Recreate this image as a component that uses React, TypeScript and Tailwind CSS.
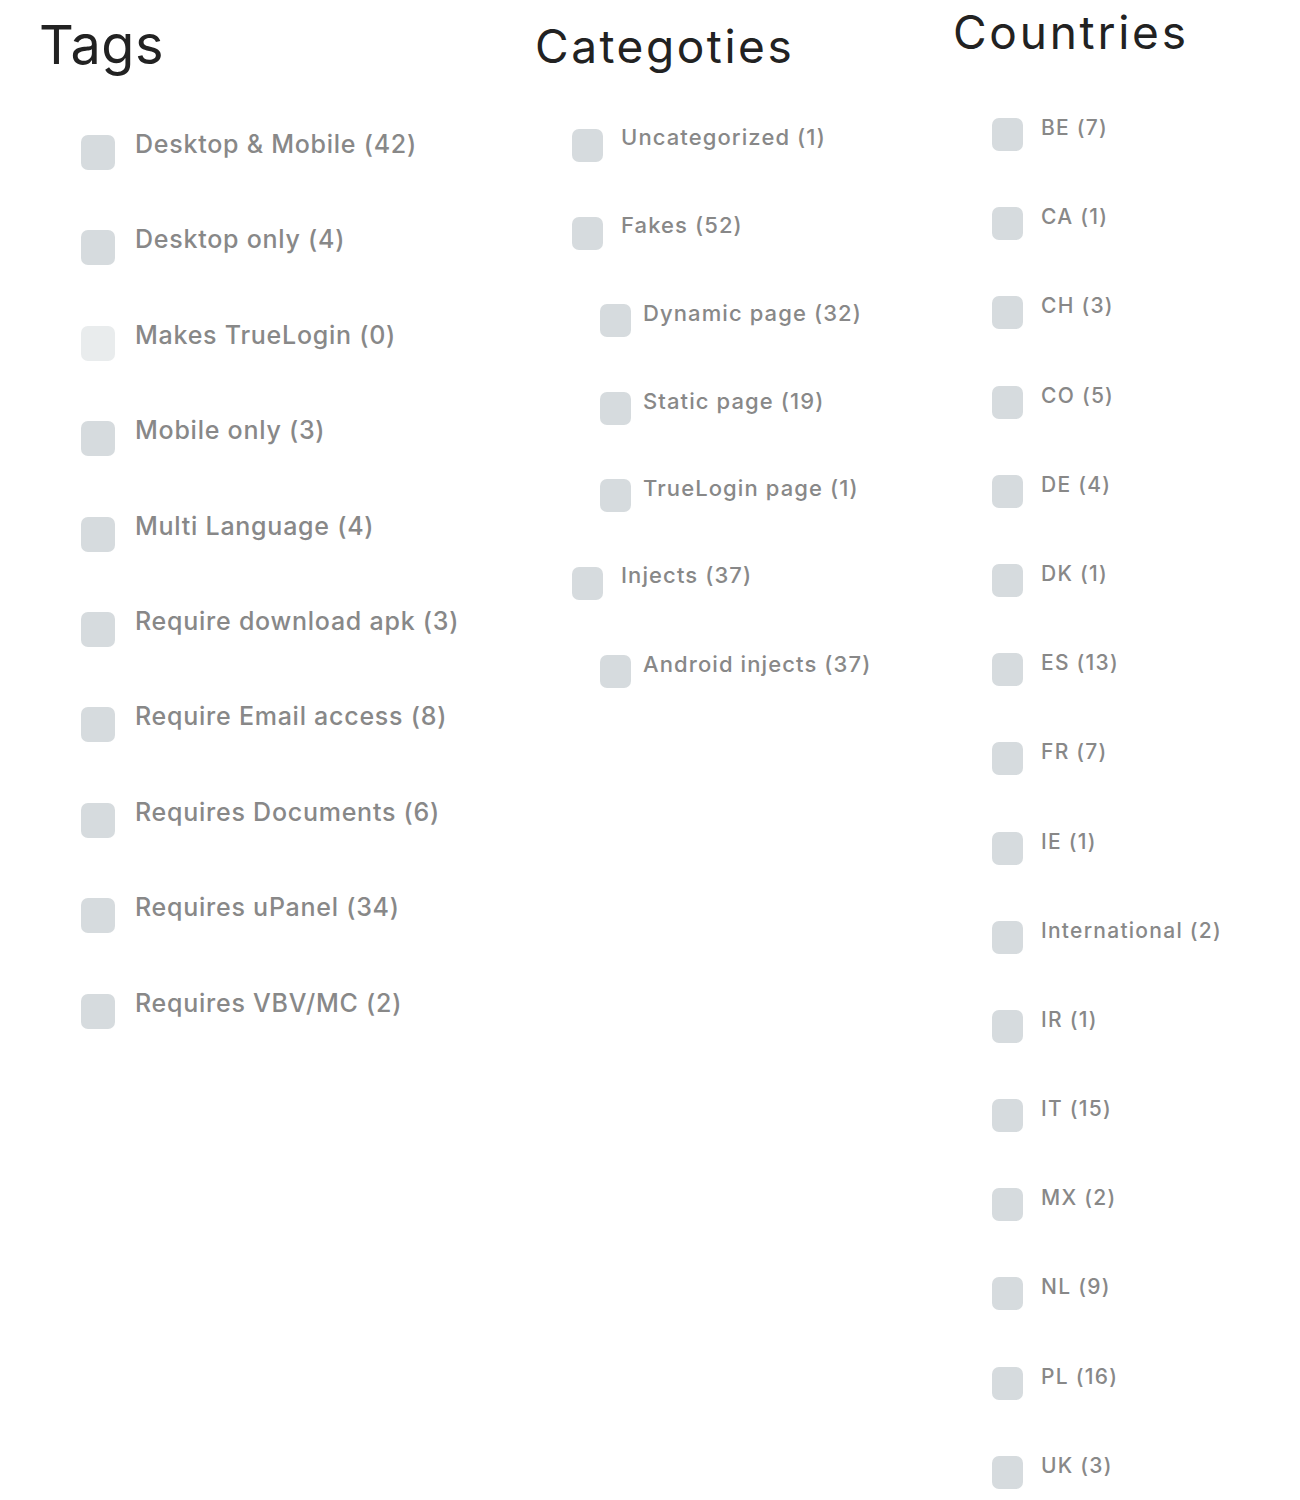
import React from "react";

type Item = { label: string; sub?: boolean; disabled?: boolean };

const tags: Item[] = [
  { label: "Desktop & Mobile (42)" },
  { label: "Desktop only (4)" },
  { label: "Makes TrueLogin (0)", disabled: true },
  { label: "Mobile only (3)" },
  { label: "Multi Language (4)" },
  { label: "Require download apk (3)" },
  { label: "Require Email access (8)" },
  { label: "Requires Documents (6)" },
  { label: "Requires uPanel (34)" },
  { label: "Requires VBV/MC (2)" },
];

const cats: Item[] = [
  { label: "Uncategorized (1)" },
  { label: "Fakes (52)" },
  { label: "Dynamic page (32)", sub: true },
  { label: "Static page (19)", sub: true },
  { label: "TrueLogin page (1)", sub: true },
  { label: "Injects (37)" },
  { label: "Android injects (37)", sub: true },
];

const countries = [
  "BE (7)",
  "CA (1)",
  "CH (3)",
  "CO (5)",
  "DE (4)",
  "DK (1)",
  "ES (13)",
  "FR (7)",
  "IE (1)",
  "International (2)",
  "IR (1)",
  "IT (15)",
  "MX (2)",
  "NL (9)",
  "PL (16)",
  "UK (3)",
];

const font = { fontFamily: "Inter, 'Noto Sans', sans-serif" };

export default function App() {
  return (
    <div
      className="flex w-[1300px] h-[1500px] bg-white overflow-hidden"
      style={font}
    >
      {/* Tags */}
      <div className="w-[535px] shrink-0 pl-[39px]">
        <h2 className="mt-[18px] text-[54px] leading-[54px] font-normal text-[#222222] tracking-[0.01em]">
          Tags
        </h2>
        <div className="mt-[63px] pl-[42px] flex flex-col">
          {tags.map((t) => (
            <label
              key={t.label}
              className="flex items-start h-[95.4px] cursor-pointer"
            >
              <span
                className={`w-[34px] h-[35px] rounded-[7px] shrink-0 ${
                  t.disabled ? "bg-[#e9eced]" : "bg-[#d6dbde]"
                }`}
              />
              <span className="ml-[20px] -mt-[8px] text-[25px] leading-[34px] font-medium text-[#888888] whitespace-nowrap tracking-[0.03em]">
                {t.label}
              </span>
            </label>
          ))}
        </div>
      </div>

      {/* Categories */}
      <div className="w-[418px] shrink-0">
        <h2 className="mt-[23px] text-[46px] leading-[46px] font-normal text-[#222222] tracking-[0.055em]">
          Categoties
        </h2>
        <div className="mt-[60px] pl-[37px] flex flex-col">
          {cats.map((c) => (
            <label
              key={c.label}
              className={`flex items-start h-[87.6px] cursor-pointer ${
                c.sub ? "pl-[28px]" : ""
              }`}
            >
              <span className="w-[31px] h-[33px] rounded-[7px] shrink-0 bg-[#d6dbde]" />
              <span
                className={`${
                  c.sub ? "ml-[12px] -mt-[7px]" : "ml-[18px] -mt-[8px]"
                } text-[22px] leading-[33px] font-medium text-[#888888] whitespace-nowrap tracking-[0.05em]`}
              >
                {c.label}
              </span>
            </label>
          ))}
        </div>
      </div>

      {/* Countries */}
      <div className="flex-1">
        <h2 className="mt-[9px] text-[46px] leading-[46px] font-normal text-[#222222] tracking-[0.06em]">
          Countries
        </h2>
        <div className="mt-[63px] pl-[39px] flex flex-col">
          {countries.map((c) => (
            <label
              key={c}
              className="flex items-start h-[89.2px] cursor-pointer"
            >
              <span className="w-[31px] h-[33px] rounded-[7px] shrink-0 bg-[#d6dbde]" />
              <span className="ml-[18px] -mt-[7px] text-[21px] leading-[33px] font-medium text-[#888888] whitespace-nowrap tracking-[0.06em]">
                {c}
              </span>
            </label>
          ))}
        </div>
      </div>
    </div>
  );
}
